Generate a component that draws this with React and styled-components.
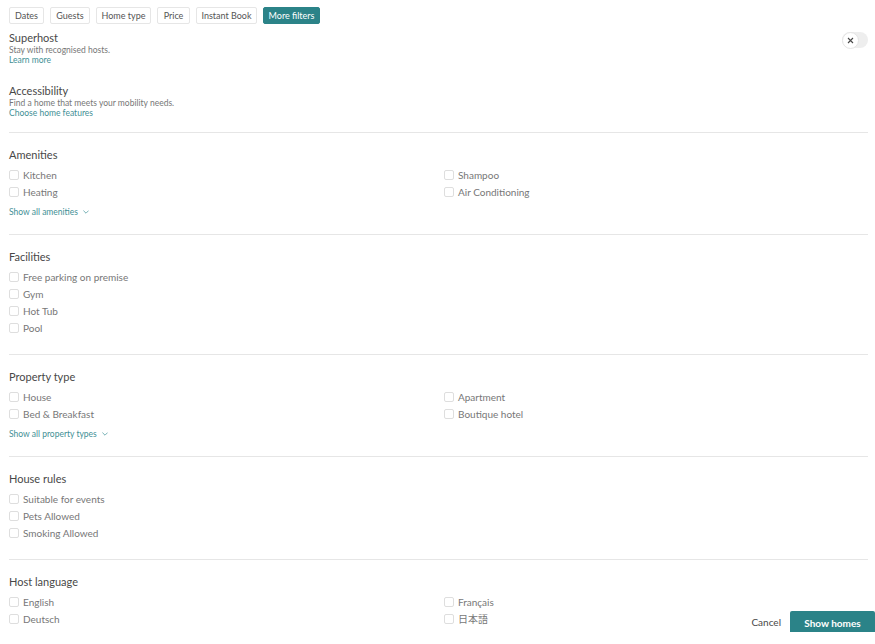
import React from 'react';
import styled, { createGlobalStyle } from 'styled-components';

const GlobalStyle = createGlobalStyle`
  html, body { margin: 0; padding: 0; height: 100%; background: #fff; }
  body { font-family: Lato, "Noto Sans CJK JP", sans-serif; overflow: hidden; }
`;

const Page = styled.div`
  width: 875px;
  height: 644px;
  display: flex;
  flex-direction: column;
  overflow: hidden;
`;

const Toolbar = styled.div`
  display: flex;
  gap: 6px;
  padding: 7px 9px 0;
  height: 17px;
  flex: none;
`;

const FilterButton = styled.button`
  box-sizing: border-box;
  height: 17px;
  width: ${(p) => p.$w}px;
  padding: 0;
  font: inherit;
  font-size: 9px;
  border-radius: 2px;
  border: 1px solid ${(p) => (p.$active ? '#2b8388' : '#e6e6e6')};
  background: ${(p) => (p.$active ? '#2b8388' : '#fff')};
  color: ${(p) => (p.$active ? '#fff' : '#555')};
`;

const Scroller = styled.div`
  height: 601px;
  flex: none;
  overflow: hidden;
  padding: 7px 7px 0 9px;
  box-sizing: content-box;
  position: relative;
`;

const Intro = styled.div`
  position: relative;
  height: ${(p) => p.$h}px;
`;

const Title = styled.div`
  font-size: 11px;
  line-height: 14px;
  color: #484848;
`;

const Hint = styled.div`
  font-size: 8.5px;
  line-height: 10px;
  color: #777;
`;

const Link = styled.a`
  display: flex;
  align-items: center;
  gap: 5px;
  font-size: 8.5px;
  line-height: 10px;
  color: #3f9096;
`;

const Toggle = styled.div`
  position: absolute;
  right: 0;
  top: 1px;
  width: 26px;
  height: 16px;
  border-radius: 8px;
  background: #eee;
`;

const Knob = styled.div`
  box-sizing: border-box;
  width: 17px;
  height: 17px;
  border-radius: 50%;
  border: 1px solid #e4e4e4;
  background: #fff;
  display: flex;
  align-items: center;
  justify-content: center;
`;

const Section = styled.section`
  border-top: 1px solid #e6e6e6;
  padding-top: 15px;
  height: ${(p) => p.$h}px;
  box-sizing: border-box;
`;

const Options = styled.div`
  margin-top: 4px;
  display: grid;
  grid-template-columns: 435px 1fr;
  grid-auto-rows: 17px;
`;

const Stack = styled.div`
  margin-top: 4px;
  display: flex;
  flex-direction: column;
`;

const Option = styled.label`
  height: 17px;
  display: flex;
  align-items: center;
  gap: 4px;
  font-size: 10px;
  color: #777;
`;

const Box = styled.span`
  box-sizing: border-box;
  width: 10px;
  height: 10px;
  border: 1px solid #dedede;
  border-radius: 2px;
  background: #fff;
  flex: none;
`;

const MoreLink = styled(Link)`
  margin-top: 7px;
`;

const Footer = styled.div`
  position: absolute;
  right: 0;
  bottom: 0;
  display: flex;
  align-items: center;
  gap: 9px;
  background: #fff;
`;

const Cancel = styled.span`
  font-size: 10px;
  color: #484848;
`;

const ShowHomes = styled.button`
  width: 85px;
  height: 21px;
  border: 0;
  border-radius: 2px 2px 0 0;
  background: #2b8388;
  color: #fff;
  font: inherit;
  font-weight: 700;
  font-size: 10px;
  padding: 3px 0 0;
`;

const Clip = styled.div`
  height: 49px;
  overflow: hidden;
`;

const Chevron = () => (
  <svg width="6" height="4" viewBox="0 0 6 4" fill="none" stroke="#3f9096" strokeWidth="0.7">
    <path d="M0.4 0.6 L3 3.2 L5.6 0.6" />
  </svg>
);

const filters = [
  ['Dates', 35],
  ['Guests', 40],
  ['Home type', 55],
  ['Price', 33],
  ['Instant Book', 61],
  ['More filters', 57, true],
];

const OptionItem = ({ label }) => (
  <Option>
    <Box />
    {label}
  </Option>
);

const App = () => (
  <Page>
    <GlobalStyle />
    <Toolbar>
      {filters.map(([label, w, active]) => (
        <FilterButton key={label} $w={w} $active={active}>
          {label}
        </FilterButton>
      ))}
    </Toolbar>
    <Scroller>
      <Intro $h={53}>
        <Title>Superhost</Title>
        <Hint>Stay with recognised hosts.</Hint>
        <Link>Learn more</Link>
        <Toggle>
          <Knob>
            <svg width="7" height="7" viewBox="0 0 7 7" stroke="#484848" strokeWidth="1.1">
              <path d="M1 1 L6 6 M6 1 L1 6" />
            </svg>
          </Knob>
        </Toggle>
      </Intro>
      <Intro $h={48}>
        <Title>Accessibility</Title>
        <Hint>Find a home that meets your mobility needs.</Hint>
        <Link>Choose home features</Link>
      </Intro>

      <Section $h={102}>
        <Title>Amenities</Title>
        <Options>
          {['Kitchen', 'Shampoo', 'Heating', 'Air Conditioning'].map((o) => (
            <OptionItem key={o} label={o} />
          ))}
        </Options>
        <MoreLink>
          Show all amenities <Chevron />
        </MoreLink>
      </Section>

      <Section $h={120}>
        <Title>Facilities</Title>
        <Stack>
          {['Free parking on premise', 'Gym', 'Hot Tub', 'Pool'].map((o) => (
            <OptionItem key={o} label={o} />
          ))}
        </Stack>
      </Section>

      <Section $h={102}>
        <Title>Property type</Title>
        <Options>
          {['House', 'Apartment', 'Bed & Breakfast', 'Boutique hotel'].map((o) => (
            <OptionItem key={o} label={o} />
          ))}
        </Options>
        <MoreLink>
          Show all property types <Chevron />
        </MoreLink>
      </Section>

      <Section $h={103}>
        <Title>House rules</Title>
        <Stack>
          {['Suitable for events', 'Pets Allowed', 'Smoking Allowed'].map((o) => (
            <OptionItem key={o} label={o} />
          ))}
        </Stack>
      </Section>

      <Section $h={70}>
        <Title>Host language</Title>
        <Clip>
          <Options>
            {['English', 'Français', 'Deutsch', '日本語'].map((o) => (
              <OptionItem key={o} label={o} />
            ))}
          </Options>
        </Clip>
      </Section>

      <Footer>
        <Cancel>Cancel</Cancel>
        <ShowHomes>Show homes</ShowHomes>
      </Footer>
    </Scroller>
  </Page>
);

export default App;
